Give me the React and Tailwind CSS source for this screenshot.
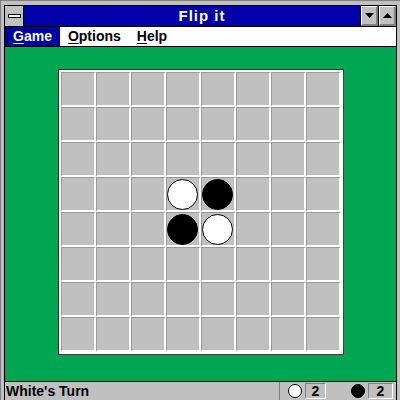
import React from 'react';

const font = { fontFamily: '"Liberation Sans", Arial, sans-serif' };

// starting position: 3,3 white; 3,4 black; 4,3 black; 4,4 white
const start = {
    '3-3': 'w',
    '3-4': 'b',
    '4-3': 'b',
    '4-4': 'w',
};

function Piece({ color }) {
    return (
        <div
            className={`w-[31px] h-[31px] rounded-full border border-black ${color === 'w' ? 'bg-white' : 'bg-black'}`}
        />
    );
}

function Cell({ piece }) {
    return (
        <div className="w-[35px] h-[35px] bg-[#c0c0c0] border-l border-t border-[#9a9a9a] border-r-2 border-b-2 border-r-white border-b-white flex items-center justify-center">
            {piece && <Piece color={piece} />}
        </div>
    );
}

function Board() {
    const cells = [];
    for (let r = 0; r < 8; r++) {
        for (let c = 0; c < 8; c++) {
            cells.push(<Cell key={`${r}-${c}`} piece={start[`${r}-${c}`]} />);
        }
    }
    return (
        <div className="border border-[#202020] bg-white p-[2px] border-r-[#404040] border-b-[#404040]">
            <div className="grid grid-cols-8 w-[280px]">{cells}</div>
        </div>
    );
}

function TitleButton({ up }) {
    return (
        <div className="w-[18px] h-[20px] bg-[#c0c0c0] border-l border-black flex">
            <div className="flex-1 border-t border-l border-white border-r-2 border-b-2 border-r-[#808080] border-b-[#808080] flex items-center justify-center">
                <svg width="9" height="5" viewBox="0 0 9 5">
                    {up ? <polygon points="0,5 9,5 4.5,0" fill="black" /> : <polygon points="0,0 9,0 4.5,5" fill="black" />}
                </svg>
            </div>
        </div>
    );
}

function MenuItem({ first, rest, active }) {
    return (
        <div className={`h-full flex items-center px-[8px] ${active ? 'bg-[#0000a8] text-white' : 'text-black'}`}>
            <span className="underline underline-offset-2">{first}</span>
            <span>{rest}</span>
        </div>
    );
}

export default function App() {
    return (
        <div className="w-[400px] h-[400px] bg-[#c0c0c0] pt-[4px] px-[3px] border-t border-l border-[#808080] overflow-hidden" style={font}>
            <div className="h-full border border-black border-b-0 flex flex-col">
                {/* title bar */}
                <div className="h-[21px] flex bg-[#0000a8] border-b border-black">
                    <div className="w-[19px] bg-[#c0c0c0] border-r border-black flex items-center justify-center">
                        <div className="w-[13px] h-[4px] bg-white border border-black" />
                    </div>
                    <div className="flex-1 flex items-center justify-center text-white font-bold text-[15px] tracking-[1px] pl-[20px]">Flip it</div>
                    <TitleButton />
                    <TitleButton up />
                </div>
                {/* menu bar */}
                <div className="h-[20px] bg-white border-b border-black flex items-center font-bold text-[14px]">
                    <MenuItem first="G" rest="ame" active />
                    <MenuItem first="O" rest="ptions" />
                    <MenuItem first="H" rest="elp" />
                </div>
                {/* play area */}
                <div className="flex-1 bg-[#00a651] flex justify-center pt-[22px]">
                    <div>
                        <Board />
                    </div>
                </div>
                {/* status bar */}
                <div className="h-[19px] border-t border-black bg-[#c0c0c0] flex items-center text-[14px] font-bold">
                    <div className="flex-1 pl-[1px]">White's Turn</div>
                    <div className="h-full flex items-center border-l border-[#808080] pl-[8px] pr-[3px] gap-[3px]">
                        <div className="w-[14px] h-[14px] rounded-full bg-white border border-black" />
                        <div className="w-[21px] h-[16px] border-t border-l border-[#808080] border-b border-r border-b-white border-r-white flex items-center justify-center">2</div>
                        <div className="w-[19px]" />
                        <div className="w-[14px] h-[14px] rounded-full bg-black border border-black" />
                        <div className="w-[25px] h-[16px] border-t border-l border-[#808080] border-b border-r border-b-white border-r-white flex items-center justify-center">2</div>
                    </div>
                </div>
            </div>
        </div>
    );
}
